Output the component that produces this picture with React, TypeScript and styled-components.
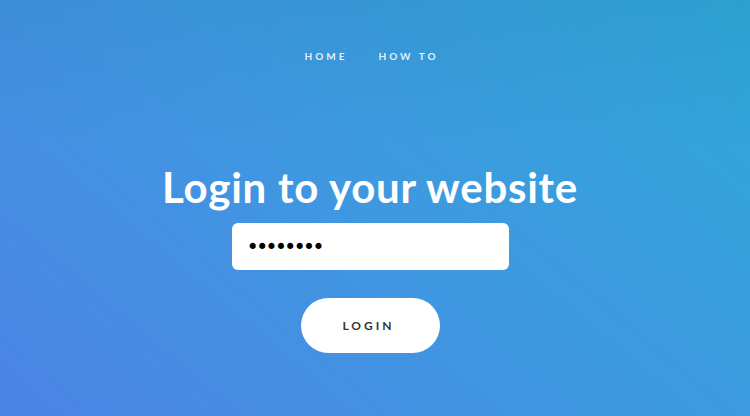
import * as React from "react";
import styled, { createGlobalStyle } from "styled-components";

const GlobalStyle = createGlobalStyle`
  html, body, #root {
    margin: 0;
    padding: 0;
    height: 100%;
  }
  body {
    font-family: "Lato", "Open Sans", sans-serif;
  }
`;

const Page = styled.div`
  height: 416px;
  box-sizing: border-box;
  padding-right: 10px;
  display: flex;
  flex-direction: column;
  align-items: center;
  background:
    linear-gradient(to bottom, rgba(20, 60, 110, 0.08), rgba(20, 60, 110, 0) 35%),
    linear-gradient(40deg, #4b84e6 0%, #3f98e0 50%, #2ea8d8 100%);
  overflow: hidden;
`;

const Nav = styled.nav`
  display: flex;
  gap: 31px;
  margin-top: 50px;
  padding-left: 3px;
`;

const NavLink = styled.a`
  color: rgba(255, 255, 255, 0.88);
  font-size: 10px;
  font-weight: 700;
  letter-spacing: 3px;
  text-decoration: none;
  line-height: 12px;
`;

const Title = styled.h1`
  margin: 102px 0 0;
  color: #fff;
  font-family: "Lato", sans-serif;
  font-weight: 700;
  font-size: 42px;
  line-height: 46px;
  letter-spacing: 0.75px;
`;

const Form = styled.form`
  display: flex;
  flex-direction: column;
  align-items: center;
  margin-top: 13px;
`;

const Input = styled.input`
  box-sizing: border-box;
  width: 277px;
  height: 47px;
  border: none;
  border-radius: 6px;
  background: #fff;
  padding: 0 15px;
  font-size: 21px;
  letter-spacing: -3px;
  color: #000;
  outline: none;
  font-family: "DejaVu Sans", sans-serif;
`;

const Button = styled.button`
  margin-top: 28px;
  width: 139px;
  height: 55px;
  border: none;
  border-radius: 28px;
  background: #fff;
  color: #333;
  font-family: "Lato", sans-serif;
  font-size: 12px;
  font-weight: 700;
  letter-spacing: 3px;
  padding-left: 3px;
  cursor: pointer;
`;

export default function App() {
  return (
    <>
      <GlobalStyle />
      <Page>
        <Nav>
          <NavLink href="#">HOME</NavLink>
          <NavLink href="#">HOW TO</NavLink>
        </Nav>
        <Title>Login to your website</Title>
        <Form onSubmit={(e) => e.preventDefault()}>
          <Input type="password" defaultValue="password" />
          <Button type="submit">LOGIN</Button>
        </Form>
      </Page>
    </>
  );
}
